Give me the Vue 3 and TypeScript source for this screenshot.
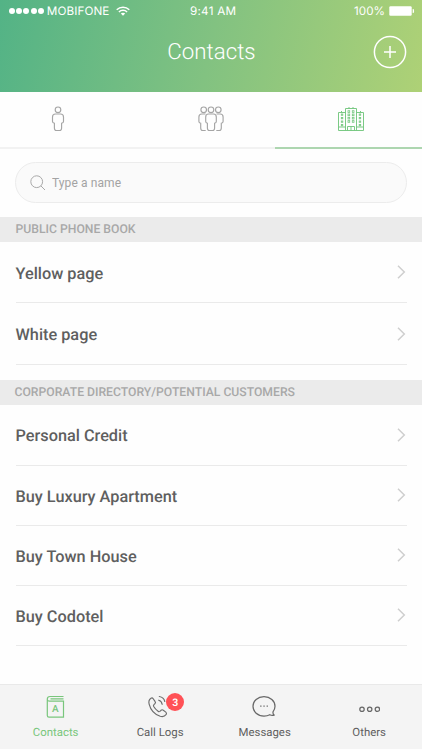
<script setup lang="ts">
interface Section {
  title: string
  kind: string
  items: string[]
}

const sections: Section[] = [
  { title: 'PUBLIC PHONE BOOK', kind: 'public', items: ['Yellow page', 'White page'] },
  {
    title: 'CORPORATE DIRECTORY/POTENTIAL CUSTOMERS',
    kind: 'corporate',
    items: ['Personal Credit', 'Buy Luxury Apartment', 'Buy Town House', 'Buy Codotel'],
  },
]

const sideWindows: number[] = [8, 11.5, 15, 18.5]
const midWindows: number[] = [4.7, 8, 11.3, 14.6]
</script>

<template>
  <div class="screen">
    <header class="header">
      <div class="status">
        <div class="carrier">
          <span class="dots"><i v-for="n in 5" :key="n"></i></span>
          <span class="carrier-name">MOBIFONE</span>
          <svg class="wifi" width="14" height="10" viewBox="0 0 14 10" fill="none" stroke="#fff" stroke-width="1.5">
            <path d="M.7 3.7C4.3.3 9.7.3 13.3 3.7" />
            <path d="M2.9 6C5.2 3.8 8.8 3.8 11.1 6" />
            <path d="M4.8 7.6C6 6.4 8 6.4 9.2 7.6L7 9.8Z" fill="#fff" stroke="none" />
          </svg>
        </div>
        <span class="time">9:41 AM</span>
        <div class="power">
          <span class="percent">100%</span>
          <svg width="26" height="10" viewBox="0 0 26 10">
            <rect x=".3" y=".3" width="22.4" height="9.4" rx="1.2" fill="#fff" />
            <path d="M23.7 3h.6q.8 0 .8 2t-.8 2h-.6z" fill="#fff" />
          </svg>
        </div>
      </div>
      <div class="titlebar">
        <h1>Contacts</h1>
        <button class="add" aria-label="Add contact">
          <svg width="34" height="34" viewBox="0 0 34 34" fill="none" stroke="#fff" stroke-width="1.5">
            <circle cx="17" cy="17" r="15.6" />
            <path d="M11 17h12M17 11v12" />
          </svg>
        </button>
      </div>
    </header>

    <nav class="tabs">
      <button class="tab single" aria-label="Personal">
        <svg width="14" height="26" viewBox="0 0 14 26" fill="none" stroke="#a5a5a5" stroke-width="1.15">
          <circle cx="7" cy="3.8" r="2.8" />
          <path d="M4.5 8h5q3 0 3 3v4.5q0 1.4-1.9 1.7V22q0 2.5-2 2.5H5.4q-2 0-2-2.5v-4.8Q1.5 16.9 1.5 15.5V11q0-3 3-3z" />
        </svg>
      </button>
      <button class="tab group" aria-label="Groups">
        <svg width="26" height="26" viewBox="0 0 26 26" fill="none" stroke="#a5a5a5" stroke-width="1.15">
          <circle cx="5.7" cy="3.8" r="2.8" />
          <circle cx="13" cy="3.8" r="2.8" />
          <circle cx="20.3" cy="3.8" r="2.8" />
          <path d="M10.5 8h5q2.8 0 2.8 3v4.5q0 1.4-1.7 1.7V22q0 2.5-2 2.5h-3.2q-2 0-2-2.5v-4.8q-1.7-.3-1.7-1.7V11q0-3 2.8-3z" />
          <path d="M7.5 8H3.8Q.9 8 .9 11v4.5q0 1.4 1.8 1.7V22q0 2.5 2 2.5h3M18.5 8h3.7q2.9 0 2.9 3v4.5q0 1.4-1.8 1.7V22q0 2.5-2 2.5h-3" />
        </svg>
      </button>
      <button class="tab company active" aria-label="Companies">
        <svg width="26" height="26" viewBox="0 0 26 26" fill="none" stroke="#74c77e" stroke-width=".95">
          <path d="M7.5 24.5V2.5h11v22M7.5 6.5h-7v18h25v-18h-7M.5 21h7M18.5 21h7M9.5 24.5v-4h7v4M13 20.5v4M11 1v1.5M15 1v1.5M3.5 5v1.5M22.5 5v1.5" />
          <g v-for="y in sideWindows" :key="'s' + y" stroke-width=".8">
            <rect x="3.3" :y="y" width="1.5" height="1.3" />
            <rect x="21.2" :y="y" width="1.5" height="1.3" />
          </g>
          <g v-for="y in midWindows" :key="'m' + y" stroke-width=".8">
            <rect x="10" :y="y" width="1.7" height="1.7" />
            <rect x="14.3" :y="y" width="1.7" height="1.7" />
          </g>
        </svg>
      </button>
    </nav>

    <div class="search">
      <svg width="16" height="16" viewBox="0 0 16 16" fill="none" stroke="#a9a9a9" stroke-width="1">
        <circle cx="6.7" cy="6.7" r="5.9" />
        <path d="M10.9 10.9l4.1 4.1" />
      </svg>
      <input type="text" placeholder="Type a name" />
    </div>

    <main>
      <section v-for="section in sections" :key="section.title" :class="section.kind">
        <h2><span>{{ section.title }}</span></h2>
        <ul>
          <li v-for="item in section.items" :key="item">
            <span class="name">{{ item }}</span>
            <svg width="10" height="16" viewBox="0 0 10 16" fill="none" stroke="#cfcfcf" stroke-width="1.5">
              <path d="M1 1.7L7.3 8 1 14.3" />
            </svg>
          </li>
        </ul>
      </section>
    </main>

    <footer class="bottom">
      <a class="item active">
        <span class="icon">
          <svg width="19" height="24" viewBox="0 0 19 24" fill="none" stroke="#79c67c" stroke-width="1.2">
            <path d="M17.5 1.5H4Q1.3 1.5 1.3 4v16.5q0 1.7 1.7 1.7h14.5V6.2H3.6Q1.3 6.2 1.3 4M17.5 3.9H4.5" />
          </svg>
          <b class="letter">A</b>
        </span>
        <span class="label">Contacts</span>
      </a>
      <a class="item calls">
        <span class="icon">
          <svg width="22" height="24" viewBox="0 0 22 24" fill="none" stroke="#6c6c6c" stroke-width="1.15" stroke-linecap="round" stroke-linejoin="round">
            <path d="M4 3.2Q1 5.3 2.2 9.3C3.6 14.8 8.2 19.5 13.2 21.3Q17 22.5 19.2 19.4Q20 18.2 18.8 17.1L16.3 15.2Q15.1 14.3 14 15.3L12.9 16.4Q12.1 17.1 11.1 16.3Q8.2 14.1 6.7 11.5Q6.1 10.4 6.9 9.7L8 8.6Q9 7.6 8 6.4L6.2 3.7Q5.3 2.4 4 3.2z" />
            <path d="M12.3 1.5Q16.8 2.2 17.8 6.5M11.7 5.2Q14.6 6 15.2 9.3" />
          </svg>
          <span class="badge">3</span>
        </span>
        <span class="label">Call Logs</span>
      </a>
      <a class="item messages">
        <span class="icon">
          <svg width="24" height="24" viewBox="0 0 24 24" fill="none" stroke="#686868" stroke-width="1.25" stroke-linejoin="round">
            <path d="M21 16.8Q23 14.3 23 11.3C23 5.9 18.3 1.7 12 1.7S1 5.9 1 11.3s4.7 9.7 11 9.7q3.3 0 5.8-1.3 1.9 1.1 4.4.4-1.5-.9-1.2-3.3z" />
            <path d="M8.2 11h1.3M11.4 11h1.3M14.6 11h1.3" />
          </svg>
        </span>
        <span class="label">Messages</span>
      </a>
      <a class="item others">
        <span class="icon">
          <svg width="22" height="24" viewBox="0 0 22 24" fill="none" stroke="#686868" stroke-width="1.25">
            <circle cx="4" cy="14.2" r="2.2" />
            <circle cx="11.7" cy="14.2" r="2.2" />
            <circle cx="19.4" cy="14.2" r="2.2" />
          </svg>
        </span>
        <span class="label">Others</span>
      </a>
    </footer>
  </div>
</template>

<style>
body {
  margin: 0;
  background: #fff;
}
</style>

<style scoped>
* {
  box-sizing: border-box;
}
.screen {
  width: 422px;
  height: 750px;
  display: flex;
  flex-direction: column;
  overflow: hidden;
  background: #fefefe;
  font-family: Roboto, sans-serif;
  color: #5f5f5f;
  text-rendering: geometricPrecision;
}
svg {
  display: block;
  flex: none;
}
button {
  border: 0;
  padding: 0;
  background: none;
}
.header {
  height: 92px;
  flex: none;
  color: #fff;
  background: linear-gradient(102deg, #53b386 0%, #82c281 50%, #aed176 100%);
}
.status {
  height: 22px;
  display: grid;
  grid-template-columns: 181px 1fr auto;
  align-items: center;
  padding: 0 7px 0 9px;
  font-family: Inter, sans-serif;
  font-size: 11.7px;
  line-height: 22px;
}
.carrier,
.power {
  display: flex;
  align-items: center;
}
.dots {
  display: flex;
  gap: 1.2px;
}
.dots i {
  width: 6px;
  height: 6px;
  border-radius: 50%;
  background: #fff;
}
.carrier-name {
  margin-left: 3px;
  width: 65px;
  white-space: nowrap;
  letter-spacing: 0.1px;
}
.time {
  letter-spacing: 0.25px;
}
.wifi {
  margin-left: 4px;
}
.power {
  justify-content: flex-end;
  gap: 4px;
}
.titlebar {
  height: 60px;
  display: grid;
  grid-template-columns: 50px 1fr 50px;
  align-items: center;
}
h1 {
  grid-column: 2;
  margin: 0 0 0 1px;
  text-align: center;
  font-size: 22.3px;
  font-weight: 300;
  line-height: 28px;
}
.add {
  justify-self: start;
  margin-left: 1px;
}
.tabs {
  height: 57px;
  flex: none;
  display: flex;
  border-bottom: 2px solid #f2f2f2;
}
.tab {
  height: 57px;
  display: flex;
  justify-content: center;
  padding-top: 14px;
}
.single {
  width: 115px;
}
.group {
  width: 160px;
  padding-left: 32px;
}
.company {
  width: 147px;
  padding-left: 4px;
}
.tab.active {
  border-bottom: 2px solid #add6b0;
}
.search {
  height: 41px;
  flex: none;
  margin: 13px 15px 14px;
  border: 1px solid #ececec;
  border-radius: 21px;
  background: #fafafa;
  display: flex;
  align-items: center;
  padding: 0 14px;
}
.search input {
  flex: 1;
  min-width: 0;
  margin-left: 6px;
  padding: 0;
  border: 0;
  background: none;
  font: 400 12px/18px Roboto, sans-serif;
  letter-spacing: 0.1px;
}
.search input::placeholder {
  color: #a3a3a3;
  opacity: 1;
}
main {
  flex: 1;
  min-height: 0;
}
h2 {
  margin: 0;
  height: 24.5px;
  padding: 0 15.5px;
  background: #ebebeb;
  color: #a8a8a8;
  font-size: 12.2px;
  font-weight: 500;
  line-height: 25px;
}
.corporate h2 {
  padding-left: 14.5px;
}
ul {
  margin: 0;
  padding: 0 15px 0 15.5px;
  list-style: none;
}
.public ul {
  margin-bottom: 15px;
}
li {
  height: 60px;
  display: flex;
  align-items: center;
  justify-content: space-between;
  border-bottom: 1px solid #eaeaea;
  font-size: 16.3px;
  font-weight: 500;
  line-height: 20px;
}
.name {
  padding-top: 3.5px;
}
li:first-child {
  height: 61px;
}
.public li {
  height: 62px;
}
.public li:first-child {
  height: 61.5px;
}
.bottom {
  height: 65px;
  flex: none;
  margin-bottom: 1px;
  padding: 0 1px 0 3px;
  display: grid;
  grid-template-columns: repeat(4, 1fr);
  background: #f4f4f4;
  border-top: 1px solid #e9e9e9;
}
.item {
  display: flex;
  flex-direction: column;
  align-items: center;
}
.icon {
  position: relative;
  height: 24px;
  margin-top: 10px;
}
.calls .icon {
  margin-left: -3px;
}
.label {
  margin-top: 5px;
  padding-left: 0.8px;
  font-size: 11.4px;
  line-height: 17px;
}
.item.active {
  color: #79c67c;
}
.letter {
  position: absolute;
  left: 0;
  right: 0;
  top: 9px;
  text-align: center;
  font-size: 10px;
  font-weight: 500;
  line-height: 11px;
}
.badge {
  position: absolute;
  left: 19px;
  top: -2px;
  width: 18px;
  height: 18px;
  border-radius: 50%;
  background: #ff5156;
  color: #fff;
  text-align: center;
  font-size: 10.5px;
  font-weight: 600;
  line-height: 19px;
}
</style>
